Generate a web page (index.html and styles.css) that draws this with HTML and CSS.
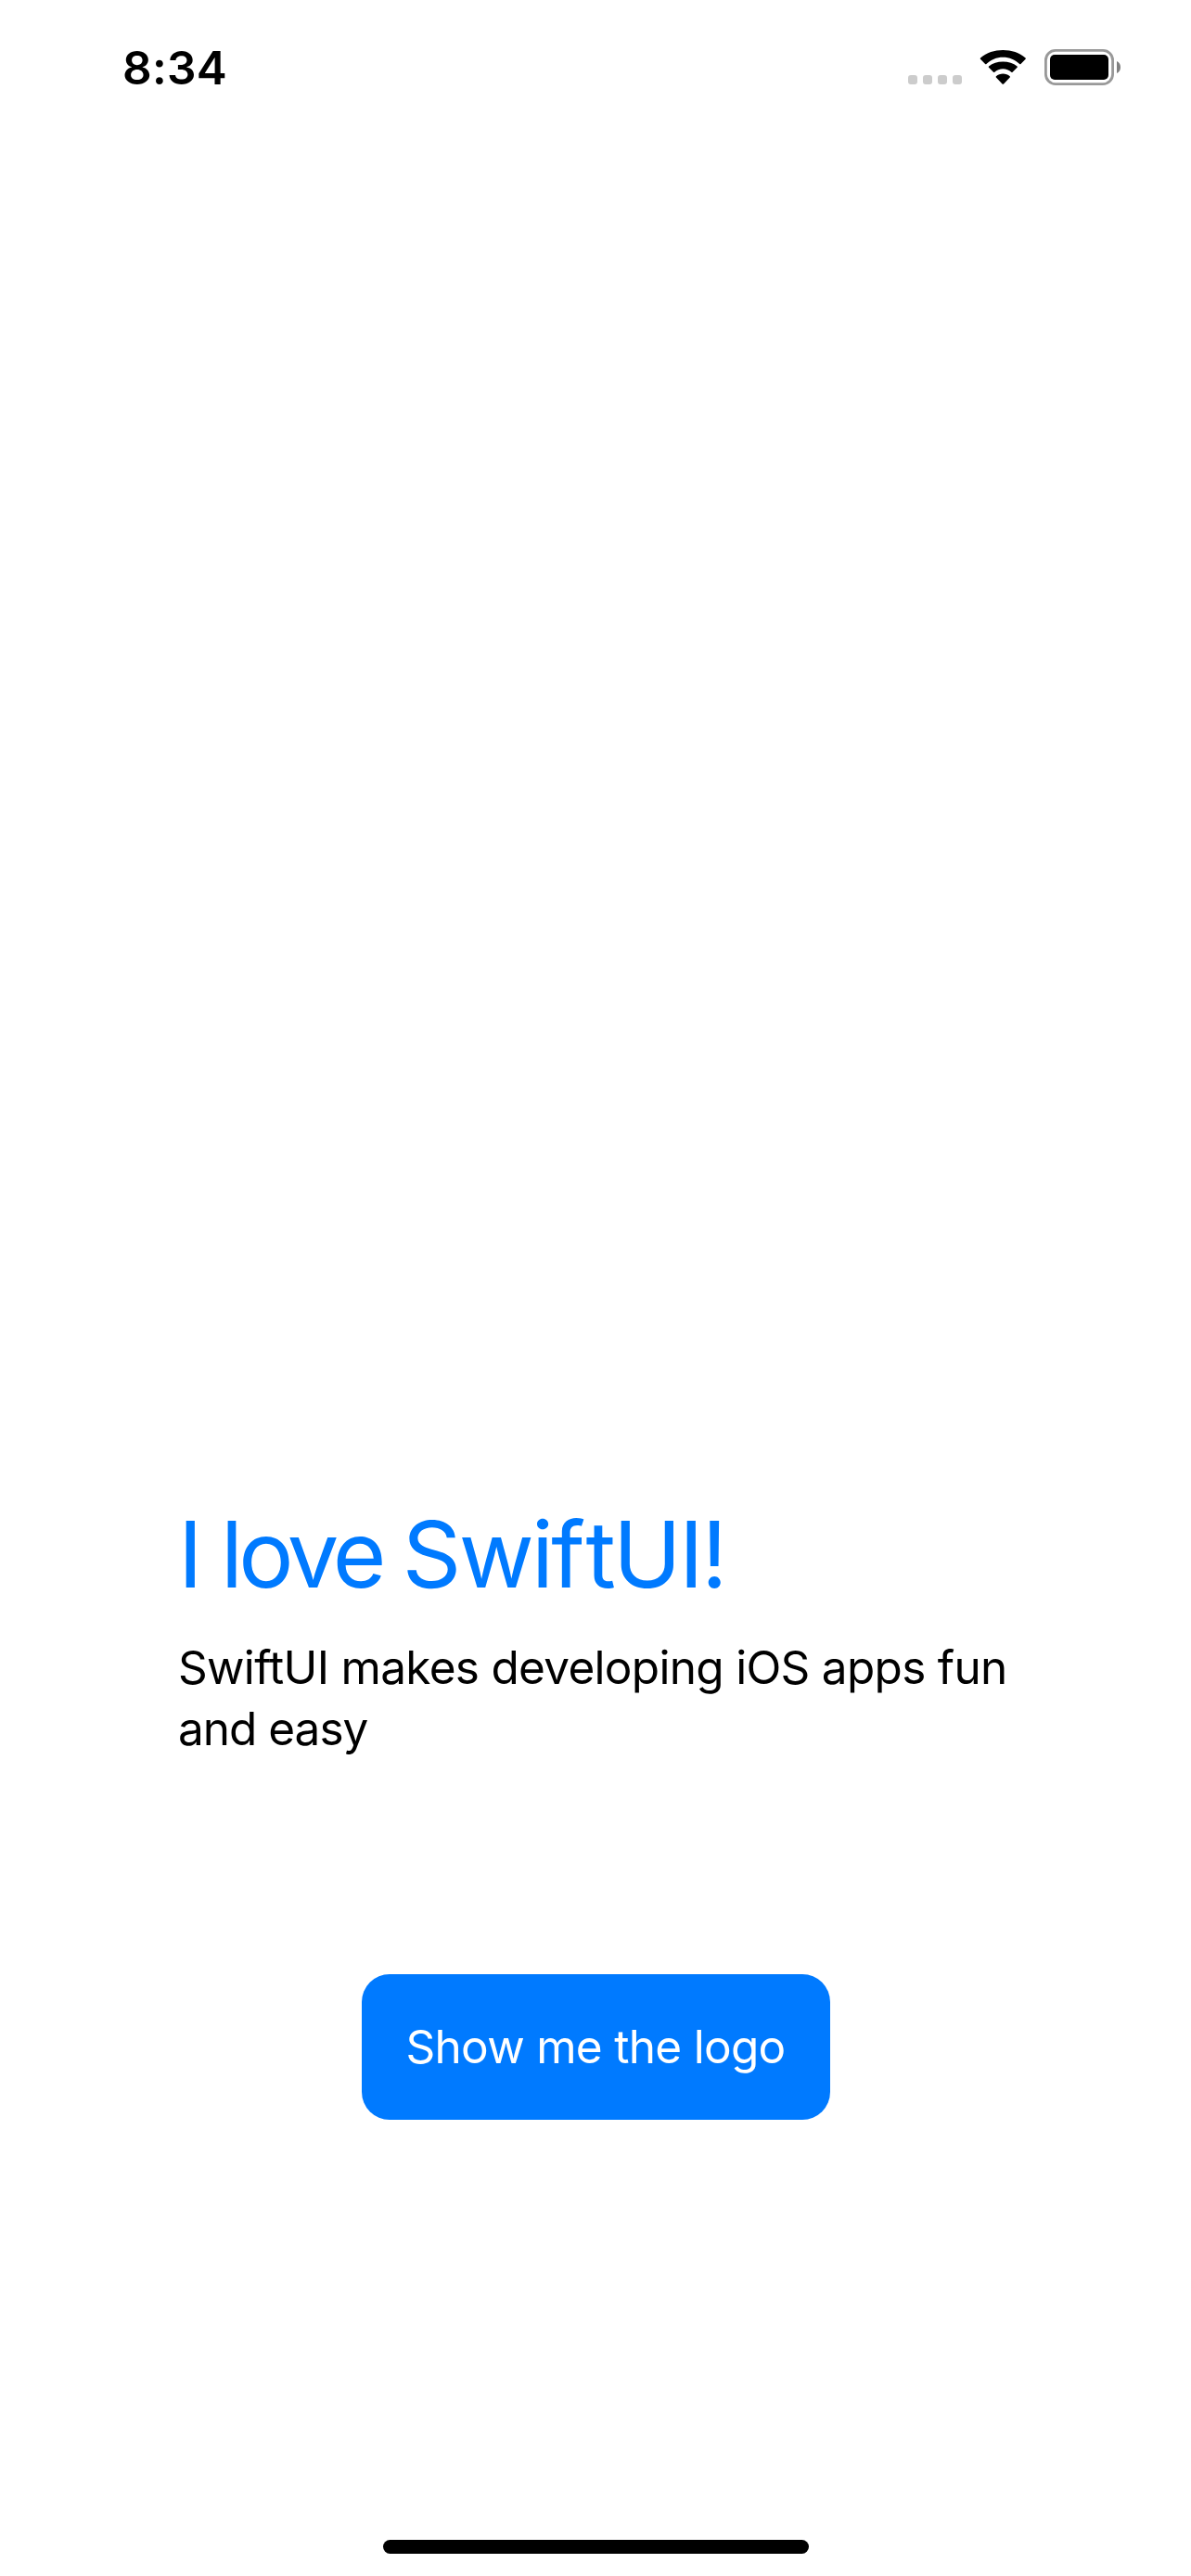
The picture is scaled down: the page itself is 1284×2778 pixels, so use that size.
FILE: index.html
```html
<!DOCTYPE html>
<html lang="en">
<head>
<meta charset="utf-8">
<title>I love SwiftUI!</title>
<link rel="stylesheet" href="styles.css">
</head>
<body>
<div class="screen">
  <header class="status-bar">
    <time class="clock">8:34</time>
    <div class="indicators">
      <svg class="signal" width="58" height="10" viewBox="0 0 58 10">
        <rect width="10" height="10" rx="3"/><rect x="16" width="10" height="10" rx="3"/><rect x="32" width="10" height="10" rx="3"/><rect x="48" width="10" height="10" rx="3"/>
      </svg>
      <svg class="wifi" width="51" height="37" viewBox="0 0 51 37">
        <path d="M25.3 7.7c6.900 0 13.200 2.700 17.900 7.300.4.400.9.400 1.300 0l5.100-5.200c.4-.4.400-.9 0-1.300C43 2.700 34.500 0 25.300 0S7.700 2.700 1 8.500c-.4.400-.4.900 0 1.300L6.100 15c.4.400.9.400 1.300 0 4.700-4.600 11-7.300 17.900-7.300z"/>
        <path d="M25.300 20.300c3.400 0 6.600 1.200 9 3.500.4.400.9.400 1.300 0l5-5.100c.4-.4.400-.9 0-1.300-4.100-3.500-9.400-4.900-15.300-4.900S14.100 13.900 10 17.400c-.4.400-.4.900 0 1.300l5 5.100c.4.400.9.400 1.300 0 2.400-2.300 5.600-3.500 9-3.500z"/>
        <path d="M32.700 28.300c.4.400.4.900 0 1.300l-6.600 6.800c-.5.500-1.100.5-1.600 0l-6.600-6.800c-.4-.4-.4-.9 0-1.300 2-1.800 4.600-2.700 7.400-2.700s5.400.9 7.400 2.700z"/>
      </svg>
      <svg class="battery" width="82" height="39" viewBox="0 0 82 39">
        <rect class="battery-case" x="1.400" y="1.400" width="72.200" height="36.200" rx="10.500"/>
        <rect x="6" y="6" width="63" height="27" rx="5"/>
        <path class="battery-cap" d="M78 13c2.500 1 4 3.500 4 6.500S80.500 25 78 26z"/>
      </svg>
    </div>
  </header>
  <main class="content">
    <h1 class="title">I <span class="tight">love</span> Swi<span class="loose">f</span>tUI!</h1>
    <p class="description">SwiftUI makes developing iOS apps fun <span class="last-line">and easy</span></p>
    <button class="logo-button" type="button">Show me the logo</button>
  </main>
  <div class="home-indicator"></div>
</div>
</body>
</html>
```
FILE: styles.css
```css
* { box-sizing: border-box; }
body {
  margin: 0;
  background: #fff;
  color: #000;
  font-family: Inter, "Liberation Sans", sans-serif;
}
.screen {
  display: flex;
  flex-direction: column;
  align-items: center;
  height: 2778px;
  padding-bottom: 24px;
}
.status-bar {
  display: flex;
  justify-content: space-between;
  align-items: flex-start;
  width: 100%;
  height: 141px;
  padding: 43px 76px 0 132px;
}
.clock {
  font-size: 49.5px;
  font-weight: 600;
  line-height: 60px;
  letter-spacing: 0.3px;
}
.indicators {
  display: flex;
  align-items: flex-end;
  height: 48px;
}
.signal { fill: #ccc; margin-right: 19px; }
.wifi { margin-right: 19px; }
.battery { margin-bottom: -1px; }
.battery-case { fill: none; stroke: #999; stroke-width: 2.8; }
.battery-cap { fill: #808080; }
.content {
  display: flex;
  flex-direction: column;
  flex: 1;
  width: 900px;
  padding-top: 1474px;
}
.title {
  margin: 0;
  color: #007aff;
  font-size: 99px;
  font-weight: 430;
  line-height: 122px;
  letter-spacing: -2.7px;
  word-spacing: -3px;
  white-space: nowrap;
}
.tight { letter-spacing: -4.8px; }
.loose { letter-spacing: 0.5px; }
.description {
  margin: 28px 0 232px;
  font-size: 49.5px;
  line-height: 66px;
  letter-spacing: -0.7px;
}
.last-line { letter-spacing: -1px; }
.logo-button {
  align-self: center;
  width: 505px;
  padding: 48px 0;
  border: 0;
  border-radius: 30px;
  background: #007aff;
  color: #fff;
  font-family: inherit;
  font-size: 49.5px;
  line-height: 61px;
  letter-spacing: -0.7px;
  white-space: nowrap;
}
.home-indicator {
  width: 459px;
  height: 15px;
  border-radius: 7.5px;
  background: #000;
}
```
